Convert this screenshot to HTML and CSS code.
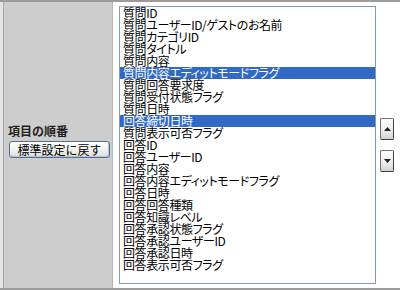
FILE: index.html
```html
<!DOCTYPE html>
<html lang="ja">
<head>
    <meta charset="UTF-8">
    <title>項目の順番</title>
    <link rel="stylesheet" href="styles.css">
</head>
<body>
    <div class="setting-row">
        <div class="label-cell">
            <div class="label">項目の順番</div>
            <button class="reset-btn">標準設定に戻す</button>
        </div>
        <div class="field-cell">
            <ul class="order-list">
                <li>質問ID</li>
                <li>質問ユーザーID/ゲストのお名前</li>
                <li>質問カテゴリID</li>
                <li>質問タイトル</li>
                <li>質問内容</li>
                <li class="selected">質問内容エディットモードフラグ</li>
                <li>質問回答要求度</li>
                <li>質問受付状態フラグ</li>
                <li>質問日時</li>
                <li class="selected">回答締切日時</li>
                <li>質問表示可否フラグ</li>
                <li>回答ID</li>
                <li>回答ユーザーID</li>
                <li>回答内容</li>
                <li>回答内容エディットモードフラグ</li>
                <li>回答日時</li>
                <li>回答回答種類</li>
                <li>回答知識レベル</li>
                <li>回答承認状態フラグ</li>
                <li>回答承認ユーザーID</li>
                <li>回答承認日時</li>
                <li>回答表示可否フラグ</li>
            </ul>
            <div class="move-btns">
                <button class="move-btn" title="上へ">
                    <svg width="7" height="4" viewBox="0 0 7 4"><path d="M3.5 0 L7 4 L0 4 Z" fill="#222"/></svg>
                </button>
                <button class="move-btn" title="下へ">
                    <svg width="7" height="4" viewBox="0 0 7 4"><path d="M0 0 L7 0 L3.5 4 Z" fill="#222"/></svg>
                </button>
            </div>
        </div>
    </div>
</body>
</html>
```

FILE: styles.css
```css
/* 全体 */
body {
    margin: 0;
    background-color: #fff;
    font-family: "Noto Sans CJK JP", "DejaVu Sans", sans-serif;
    font-size: 12px;
    color: #000;
}

/* 設定行 */
.setting-row {
    display: flex;
    height: 286px;
    border-top: 2px solid #9c9c9c;
    border-bottom: 2px solid #9c9c9c;
    padding-left: 3px;
    background-color: #e4e4e4;
}

.label-cell {
    width: 110px;
    box-sizing: border-box;
    border-left: 1px solid #a8a8a8;
    border-right: 1px solid #b4b4b4;
    background-color: #cdcdcd;
    padding: 0 0 8px 4px;
    display: flex;
    flex-direction: column;
    justify-content: center;
}

.label {
    font-weight: bold;
    line-height: 14px;
    color: #222;
}

.reset-btn {
    margin: 3px 0 0 1px;
    width: 101px;
    height: 17px;
    padding: 0;
    font-family: inherit;
    font-size: 12px;
    line-height: 15px;
    color: #000;
    border: 1px solid #5a6f8c;
    border-radius: 3px;
    background: linear-gradient(#ffffff, #f0f0ea 60%, #dcdcd4);
    box-shadow: inset -1px -1px 0 #a9c2e8;
}

/* 右側 */
.field-cell {
    flex: 1;
    background-color: #fff;
    display: flex;
    align-items: center;
    padding-left: 6px;
}

.order-list {
    list-style: none;
    margin: 0;
    padding: 0;
    width: 257px;
    height: 278px;
    box-sizing: border-box;
    border: 1px solid #7f9db9;
    background-color: #fff;
    overflow: hidden;
    font-feature-settings: "palt";
    letter-spacing: -0.4px;
}

.order-list li {
    height: 12px;
    line-height: 12px;
    padding-left: 3px;
    white-space: nowrap;
}

.order-list li.selected {
    background-color: #316ac5;
    color: #fff;
}

.move-btns {
    margin-left: 4px;
    display: flex;
    flex-direction: column;
    gap: 10px;
}

.move-btn {
    width: 14px;
    height: 22px;
    padding: 0;
    display: flex;
    align-items: center;
    justify-content: center;
    border: 1px solid #707070;
    border-right-color: #404040;
    border-bottom-color: #404040;
    border-radius: 2px;
    background: linear-gradient(#fdfdfd, #e8e8e8 70%, #d0d0d0);
}
```
